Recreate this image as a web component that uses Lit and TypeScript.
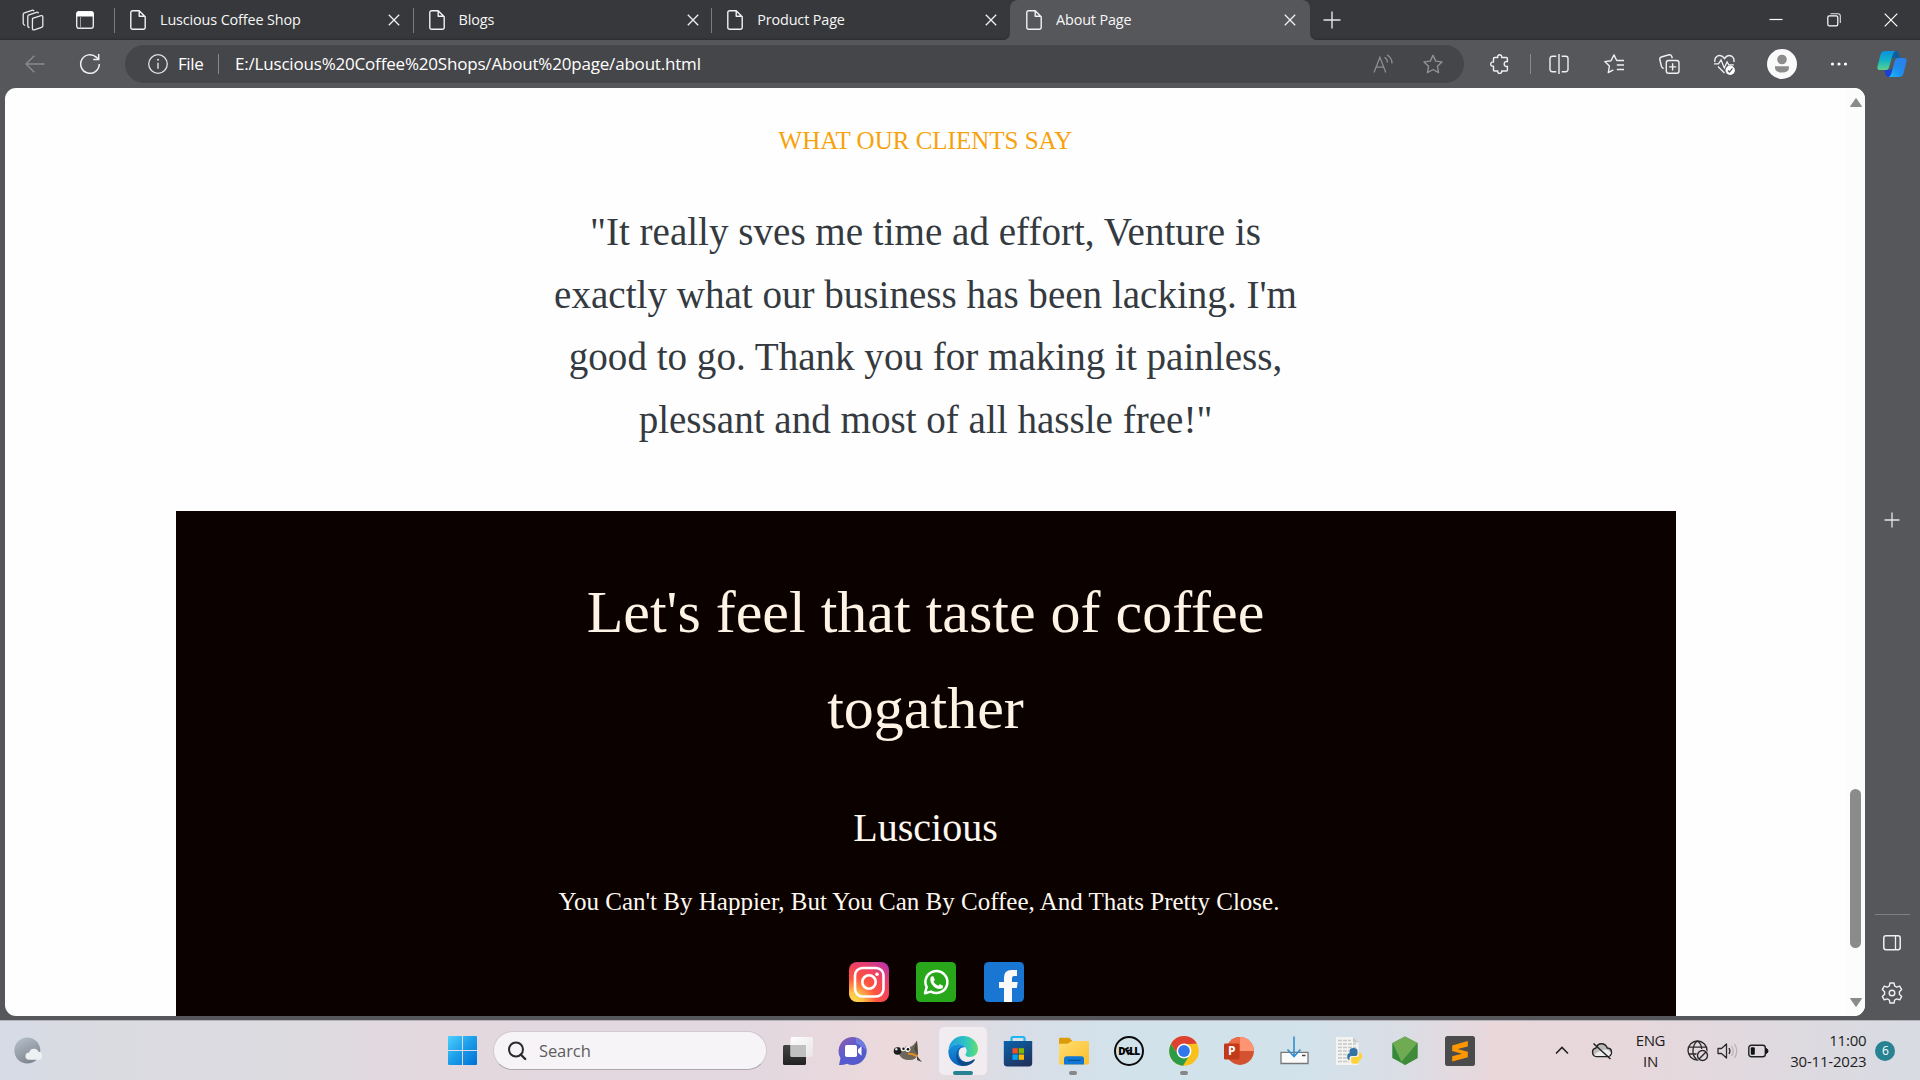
import { LitElement, html, css, svg, nothing } from "lit";
import { customElement, property } from "lit/decorators.js";

const icon = (w: number, h: number, body: unknown, cls = "") =>
  html`<svg class="ico ${cls}" width=${w} height=${h} viewBox="0 0 ${w} ${h}" fill="none">${body}</svg>`;

const docIcon = icon(16, 20, svg`<path d="M3 .8h6.2l6 6v10.6a1.8 1.8 0 0 1-1.8 1.8H2.6A1.8 1.8 0 0 1 .8 17.400V2.600A1.8 1.8 0 0 1 2.600 .8ZM9.200 1v5.300h5.600" stroke="#f2f2f2" stroke-width="1.4" stroke-linejoin="round"/>`);
const closeIcon = icon(12, 12, svg`<path d="M.8.8l10.400 10.400M11.200.8L.8 11.200" stroke="#f0f0f0" stroke-width="1.3"/>`);

const chrome = {
  spaces: icon(22, 22, svg`<g stroke="#e8e8e8" stroke-width="1.3" stroke-linejoin="round"><path d="M10.500 9.300l8.500-2.600q1.800-.4 1.800 1.300v8.800q0 1.200-1.200 1.600l-7.400 2.400q-1.800.4-1.800-1.300Z"/><path d="M7.500 18.500q-1.700 0-1.700-1.700V7.400q0-1.200 1.200-1.600l7.500-2.500q1.600-.4 1.900 1.100"/><path d="M3.200 16.300q-2-.2-2-2V5.500q0-1.200 1.200-1.600L10 1.300q1.500-.4 1.900.9"/></g>`),
  tabs: icon(18, 18, svg`<rect x=".7" y=".7" width="16.600" height="16.600" rx="2.200" stroke="#e8e8e8" stroke-width="1.4"/><path d="M.5 2.500a2 2 0 0 1 2-2h13a2 2 0 0 1 2 2V5.500H.5Z" fill="#fff"/><path d="M4.500 5v12" stroke="#999a9c" stroke-width="1"/>`),
  plus: icon(18, 18, svg`<path d="M9 .5v17M.5 9h17" stroke="#e6e6e6" stroke-width="1.400"/>`),
  min: icon(14, 14, svg`<path d="M.5 6.500h13" stroke="#fff" stroke-width="1.200"/>`),
  max: icon(14, 14, svg`<rect x=".8" y="2.800" width="10" height="10" rx="1.600" stroke="#fff" stroke-width="1.200"/><path d="M3.500.7h7.500a2.300 2.300 0 0 1 2.300 2.300v7" stroke="#e2e2e2" stroke-width="1.100"/>`),
  close: icon(14, 14, svg`<path d="M.7.7l12.600 12.600M13.300.7L.7 13.300" stroke="#fff" stroke-width="1.200"/>`),
  back: icon(20, 18, svg`<path d="M19.500 9H1M9.300.8L1 9l8.300 8.200" stroke="#898a8d" stroke-width="1.400"/>`),
  reload: icon(22, 22, svg`<path d="M20.300 11a9.300 9.300 0 1 1-3.100-6.900L19.600 6.300" stroke="#f0f0f0" stroke-width="1.500"/><path d="M19.700 1v5.500h-5.500" stroke="#f0f0f0" stroke-width="1.500"/>`),
  info: icon(20, 20, svg`<circle cx="10" cy="10" r="9.300" stroke="#e0e0e0" stroke-width="1.300"/><path d="M10 8.800v6" stroke="#e0e0e0" stroke-width="1.400"/><circle cx="10" cy="5.800" r="1" fill="#e0e0e0"/>`),
  read: icon(20, 20, svg`<g stroke="#8d8e90" stroke-width="1.300"><path d="M1 18.500L6.900 3.200l5.900 15.300M3.200 13.200h7.600"/><path d="M11.500 3.300q3 1.800 3 5.300M14 .8q5 3.200 5 8.600"/></g>`),
  star: icon(20, 20, svg`<path d="M10 1.300l2.700 5.800 6.300.8-4.600 4.400 1.200 6.300L10 15.500l-5.600 3.100 1.200-6.300L1 7.900l6.300-.8Z" stroke="#909193" stroke-width="1.400" stroke-linejoin="round"/>`),
  puzzle: icon(20, 20, svg`<path d="M4.500 3.500h3.300C6.700-.1 12.600-.1 11.600 3.500h4.800q1 0 1 1v3.200c-4.300-1.200-4.300 5.800 0 4.600v3.700q0 1-1 1h-4.800c1 3.200-4.900 3.200-3.800 0H4.500q-1 0-1-1v-3.800c-3.700.9-3.700-5 0-4.200V4.500q0-1 1-1Z" stroke="#f0f0f0" stroke-width="1.400" stroke-linejoin="round"/>`),
  split: icon(20, 20, svg`<path d="M7.300 2.300H3.200a2.200 2.200 0 0 0-2.200 2.200v11a2.200 2.200 0 0 0 2.200 2.200h4.100M12.700 2.300h4.100A2.200 2.200 0 0 1 19 4.500v11a2.200 2.200 0 0 1-2.200 2.200h-4.100M10 0v20" stroke="#f0f0f0" stroke-width="1.400"/>`),
  favs: icon(21, 20, svg`<path d="M12.800 6.800L10 .9 7 6.800l-6.200.8 4.600 4.500-1.100 6.500 5-2.700M12.800 6.500H20M12.800 11H20M12.800 15.500H20" stroke="#f0f0f0" stroke-width="1.400" stroke-linejoin="round"/>`),
  collections: icon(21, 20, svg`<rect x="7.300" y="6.500" width="12.700" height="12.700" rx="2.200" stroke="#f0f0f0" stroke-width="1.400"/><path d="M13.600 9.300v7.200M10 12.900h7.200M4.700 14.500Q3 14 2.400 12.200L.8 5.500Q.5 3.700 2.300 3L10 .8q2-.3 2.700 1.500l.6 1.900" stroke="#f0f0f0" stroke-width="1.400"/>`),
  heart: icon(21, 21, svg`<path d="M1 8C0 4 3 1.300 6 1.500q2.700.2 4.500 3Q12.500 1.500 15 1.500c3.400 0 5.700 3 4.800 6.500M4 12.500l6.500 6.500" stroke="#f0f0f0" stroke-width="1.400"/><path d="M0 9.800h4.500L7 6l3.300 8 2.800-6 1.700 2.800h5" stroke="#f0f0f0" stroke-width="1.300"/><circle cx="16.200" cy="16.200" r="4.700" fill="#fff"/><path d="M14 16.500l1.500 1.500 3-3.600" stroke="#56575b" stroke-width="1.200"/>`),
  avatar: icon(30, 30, svg`<circle cx="15" cy="15" r="15" fill="#fafafa"/><circle cx="15" cy="10.500" r="4.800" fill="#8c8c8c"/><path d="M8 17.200h14v1.300q0 5-7 5t-7-5Z" fill="#8c8c8c"/>`),
  dots: icon(18, 6, svg`<circle cx="2.500" cy="3" r="1.600" fill="#fff"/><circle cx="9" cy="3" r="1.600" fill="#fff"/><circle cx="15.500" cy="3" r="1.600" fill="#fff"/>`),
  copilot: icon(30, 28, svg`<defs><linearGradient id="cp1" x1="0" y1="0" x2="0" y2="1"><stop stop-color="#0b91de"/><stop offset=".5" stop-color="#12b4c4"/><stop offset="1" stop-color="#5ed18c"/></linearGradient><linearGradient id="cp2" x1="1" y1="0" x2="0" y2="1"><stop stop-color="#2d7be8"/><stop offset=".55" stop-color="#1f8df0"/><stop offset="1" stop-color="#15bdf6"/></linearGradient></defs><path d="M16 1h3q2.200 0 3 2.500L23 8h-6q-2.500 0-3.200 3Z" fill="#0e5e9c"/><path d="M14 27h-2.500q-2.200 0-3-2.500L7.500 20H12q2.500 0 3.500-3Z" fill="#1b3fd6"/><path d="M8 1h10.500q-2 .8-3 4L12 17.500Q11.300 20 9 20H3Q-.2 20 .5 16.500L3.500 4.500Q4.500 1 8 1Z" fill="url(#cp1)"/><path d="M22 27H11.500q2-.8 3-4L18 10.500Q18.700 8 21 8h6q3.200 0 2.500 3.500l-3 12Q25.500 27 22 27Z" fill="url(#cp2)"/>`),
  panel: icon(18, 16, svg`<rect x=".8" y=".8" width="16.400" height="14" rx="2.200" stroke="#f0f0f0" stroke-width="1.500"/><path d="M12.500 1v14" stroke="#f0f0f0" stroke-width="1.300"/>`),
  gear: icon(22, 22, svg`<circle cx="11" cy="11" r="2.800" stroke="#f0f0f0" stroke-width="1.400"/><path d="M9 1h4l.7 3 2 1.100 3-1 2 3.500L18.400 9.800v2.400l2.300 2.200-2 3.500-3-1-2 1.100-.7 3H9l-.7-3-2-1.100-3 1-2-3.500 2.300-2.200V9.800L1.300 7.600l2-3.500 3 1 2-1.100Z" stroke="#f0f0f0" stroke-width="1.400" stroke-linejoin="round"/>`),
};

const social = {
  instagram: icon(40, 40, svg`<defs><radialGradient id="ig" cx=".1" cy="1" r="1.300"><stop stop-color="#ffdd55"/><stop offset=".18" stop-color="#ffc247"/><stop offset=".45" stop-color="#ff543e"/><stop offset=".68" stop-color="#f2445c"/><stop offset="1" stop-color="#b733b4"/></radialGradient></defs><rect width="40" height="40" rx="8" fill="url(#ig)"/><rect x="6" y="6" width="28.500" height="28.500" rx="7.500" stroke="#fff" stroke-width="2.600"/><circle cx="20" cy="20" r="6.700" stroke="#fff" stroke-width="2.600"/><circle cx="28" cy="12.300" r="1.800" fill="#fff"/>`),
  whatsapp: icon(40, 40, svg`<rect width="40" height="40" rx="4.500" fill="#29a71a"/><path d="M9 31.200l1.700-6A11 11 0 1 1 15 29.600Z" stroke="#fff" stroke-width="2.500" stroke-linejoin="round"/><path d="M14.700 15.300q1-1.600 2.600-1l1.400 3.300q.2.700-1.200 2.100 1.600 2.900 4.600 4 1.300-1.700 1.900-1.500l3 1.500q.4 3.100-3.400 3.400c-5 0-11-6.800-8.900-11.800Z" fill="#fff"/>`),
  facebook: icon(40, 40, svg`<rect width="40" height="40" rx="4.500" fill="#1976d2"/><path d="M33.700 20l-.9 6H28v14h-8V26h-5v-6h5v-4.500Q20 8 27.500 8H33v6h-3q-2 0-2 2v4Z" fill="#fafafa"/>`),
};

const apps: { art: unknown; state?: "active" | "open" }[] = [
  { art: icon(32, 30, svg`<defs><linearGradient id="tv" x1="0" y1="0" x2="0" y2="1"><stop stop-color="#444"/><stop offset="1" stop-color="#222"/></linearGradient><linearGradient id="tv2" x1="0" y1="0" x2="1" y2="1"><stop stop-color="#fff"/><stop offset="1" stop-color="#e8e5e5"/></linearGradient></defs><rect x="1" y="9" width="23" height="20" rx="1.500" fill="url(#tv)"/><rect x="8.500" y="1" width="22.500" height="20" rx="1.500" fill="url(#tv2)" opacity=".95"/><path d="M8.500 9H24v12H10a1.500 1.500 0 0 1-1.500-1.500Z" fill="#b9b9b9" opacity=".85"/>`) },
  { art: icon(30, 30, svg`<defs><linearGradient id="ch" x1="0" y1="0" x2=".8" y2="1"><stop stop-color="#935ea9"/><stop offset=".5" stop-color="#5b5bd0"/><stop offset="1" stop-color="#5059c9"/></linearGradient></defs><path d="M15 1a14 14 0 1 1-6 26.800Q5 29.400 1 29l1.500-7A14 14 0 0 1 15 1Z" fill="url(#ch)"/><path d="M18 2a14 14 0 0 1 11 13l-4-4-7-4Z" fill="#7b95ea" opacity=".6"/><rect x="7" y="9" width="12" height="12" rx="1.800" fill="#fff"/><path d="M20 13.500l3.500-3.300v9.600L20 16.500Z" fill="#fff"/>`) },
  { art: icon(30, 30, svg`<path d="M5 11q4 2 8-.5 5 3 11-6l1 14q-2.500 6-9 5.500-7 0-10-5.500Z" fill="#6c665b"/><path d="M24 5l-3 8 4 6Z" fill="#4b463e"/><circle cx="4.500" cy="15" r="3.800" fill="#1c1d1e"/><circle cx="3.300" cy="13.300" r="1.200" fill="#dcdcdc"/><circle cx="10" cy="12.800" r="2.500" fill="#e9e9e5"/><circle cx="14.700" cy="13.200" r="2.700" fill="#f1f1ee"/><circle cx="10.500" cy="12.800" r="1.200" fill="#111"/><circle cx="15" cy="13.200" r="1.300" fill="#111"/><path d="M15 17.500q5 0 9.500 3" stroke="#e28c20" stroke-width="2.200"/><path d="M24 20l5 6-5-2Z" fill="#444"/>`, "gimp") },
  { state: "active", art: icon(30, 30, svg`<defs><linearGradient id="e1" x1="0" y1=".5" x2="1" y2=".5"><stop stop-color="#1b9de2"/><stop offset=".6" stop-color="#2fc6c0"/><stop offset="1" stop-color="#63e06f"/></linearGradient><linearGradient id="e2" x1="0" y1="0" x2="0" y2="1"><stop stop-color="#1795df"/><stop offset="1" stop-color="#0c5fb8"/></linearGradient></defs><path d="M.5 14C1 6 7.500 0 15 0c9 0 15 6.500 15 13 0 5-3.800 8-8.200 8-3 0-4.600-1.200-4.600-2.300 0-.9 1.300-1.400 1.300-3.900C18.500 10.800 14.500 8 10.300 8 5.500 8 1.500 10.800.5 14Z" fill="url(#e1)"/><path d="M.4 14.500C1.600 10.800 5.500 8 10.300 8c3.300 0 6 1.500 7.400 3.700-5.500-2-8.300 3.800-6.200 9 1.500 3.500 5.500 6.300 10.500 5.500Q18.500 30 13.500 30C6 29.300-.3 23 .4 14.500Z" fill="url(#e2)"/><path d="M17 11.300c-6.500-1.300-9 5.700-6.500 10.500 2.300 4.300 8.500 5.800 14.500 1.900q1.600-1 2 .2Q23 30 15 30 9 28 8.300 20.500 8 13.500 12.500 11.500Q15 10.800 17 11.300Z" fill="#114a8b"/><path d="M17 11.300q-4.500 1.500-3 6 1.600 5 9.500 3.500-6 1-6.300-2.100 0-.9 1.100-2.300.6-3-1.300-5.100Z" fill="#f0ecf0"/>`) },
  { art: icon(30, 32, svg`<defs><linearGradient id="st" x1="0" y1="0" x2=".6" y2="1"><stop stop-color="#0a64ad"/><stop offset="1" stop-color="#1f3360"/></linearGradient></defs><path d="M8.500 7V3.500a1.500 1.500 0 0 1 1.500-1.500h10a1.500 1.500 0 0 1 1.500 1.500V7" stroke="#20b5f0" stroke-width="2.200"/><path d="M.8 6h28.400v22a3.500 3.500 0 0 1-3.500 3.500H4.300A3.500 3.500 0 0 1 .8 28Z" fill="url(#st)"/><path d="M9.500 13.200h5.300v5.300H9.500Z" fill="#f25022"/><path d="M15.700 13.200H21v5.300h-5.300Z" fill="#7fba00"/><path d="M9.500 19.500h5.300v5.300H9.500Z" fill="#00a4ef"/><path d="M15.700 19.500H21v5.300h-5.300Z" fill="#ffb900"/>`) },
  { state: "open", art: icon(30, 28, svg`<defs><linearGradient id="fx" x1="0" y1="0" x2="1" y2="1"><stop stop-color="#ffdd70"/><stop offset="1" stop-color="#fdbf2d"/></linearGradient></defs><path d="M0 2Q0 .7 1.300.7h9l3.200 3.300-3 5H0Z" fill="#dc9c0a"/><path d="M0 6.800h8.500L13 4h15.700Q30 4 30 5.300v20.900q0 1.300-1.300 1.300H1.300Q0 27.500 0 26.200Z" fill="url(#fx)"/><path d="M5 27.500V22q0-2.700 2.700-2.700h14.600Q25 19.300 25 22v5.500Z" fill="#0f78d4"/><path d="M9 23.300h12.500" stroke="#0a4f96" stroke-width="1.200"/>`) },
  { art: html`<span class="dell"><b>D<i>E</i>LL</b></span>` },
  { state: "open", art: icon(30, 30, svg`<circle cx="15" cy="15" r="14.800" fill="#f9c21b"/><path d="M2 8A14.800 14.800 0 0 1 28 7.600L15 8.500 9 18.500Z" fill="#de4031"/><path d="M1.900 8A14.800 14.800 0 0 0 14 29.800L21 18.500 9.200 18.800Z" fill="#2c9b48"/><circle cx="15" cy="15" r="7.400" fill="#fff"/><circle cx="15" cy="15" r="5.900" fill="#2f77ea"/>`) },
  { art: html`<span class="ppt">${icon(30, 30, svg`<circle cx="16" cy="15" r="13.900" fill="#d35230"/><path d="M16 1.100a13.900 13.900 0 0 1 13.900 13.900H16Z" fill="#ff9473"/><path d="M16 1.100V15H2.100A13.900 13.900 0 0 1 16 1.100Z" fill="#ed6c47"/><rect x="0" y="7.500" width="15.500" height="16" rx="1.300" fill="#c13b1b"/>`)}<b>P</b></span>` },
  { art: icon(30, 30, svg`<path d="M2 16.300h27v11.200H2Z" fill="#fafafa" stroke="#777" stroke-width="1.300"/><path d="M15 .5v19M8.500 13.500l6.500 7 6.500-7" stroke="#3190d0" stroke-width="1.600"/><path d="M23 19.500h3.500" stroke="#444" stroke-width="1.500"/>`) },
  { art: icon(30, 30, svg`<path d="M2 1h17l5.500 5.500V29H2Z" fill="#f3f3f1"/><path d="M19 1v5.500h5.500Z" fill="#c9c9c9"/><path d="M4 4.500h13M4 8h18M4 11.500h18M4 15h11M4 18.500h10M4 22h10M4 25.500h11" stroke="#c7c8c9" stroke-width="1.300" stroke-dasharray="4 1"/><path d="M15.500 17v-2q0-3 4-3t4 3v3q0 2-2 2h-4q-2 0-2 2v2q-2.300 0-2.300-3.500T16 17Z" fill="#3772a4"/><path d="M25 16.500q3.200 0 3.200 3.700T25 24v1.500q0 2.300-4 2.300t-4-2.300V23q0-2 2-2h4q2 0 2-2Z" fill="#ffd43b"/>`) },
  { art: icon(28, 30, svg`<path d="M14 .5l12.500 6.500v15L14 29 1.500 22V7Z" fill="#4a9844"/><path d="M14 .5l12.500 6.500L10.500 26 1.500 7Z" fill="#6eab53"/><path d="M1.500 7l9 19L1.500 22Z" fill="#35893b"/><path d="M26.500 7L10.500 26l3.500 3 12.500-7Z" fill="#3f8a3b"/>`) },
  { art: icon(30, 30, svg`<rect width="30" height="30" rx="2.500" fill="#4b4b4b"/><path d="M22.800 5v5.400L12.500 13l10.300 2.800v5.500L7.200 25.500v-5.300l9.800-2.500-9.800-2.600V9.500Z" fill="#ff9800"/>`) },
];

const tray = {
  chevron: icon(14, 9, svg`<path d="M1 7.500l6-6 6 6" stroke="#222" stroke-width="1.600"/>`),
  cloud: icon(22, 18, svg`<path d="M5.500 14.500a4.300 4.300 0 0 1-.5-8.500Q6.300 1.700 10.500 1.700T16.300 6q4.200.2 4.200 4.200t-4 4.300Z" fill="#bbb" stroke="#222" stroke-width="1.400"/><path d="M3 13q6-6 14-5l3 3-2 3H5Z" fill="#ececec"/><path d="M2.500 1.500l17 15.500" stroke="#222" stroke-width="1.500"/>`),
  globe: icon(22, 22, svg`<g stroke="#2a2a2a" stroke-width="1.300"><circle cx="10.500" cy="10.500" r="9.500"/><path d="M2 7.200h17M2 14h8M10 20q-4.500-4-4-10Q6.500 3.500 10.500 1q4 3 4.200 8"/></g><circle cx="15.500" cy="15.500" r="6.300" fill="#e4d9de"/><circle cx="15.500" cy="15.500" r="5" stroke="#2a2a2a" stroke-width="1.400"/><path d="M12 19l7-7" stroke="#2a2a2a" stroke-width="1.400"/>`),
  speaker: icon(22, 18, svg`<path d="M1 6.500h3.500L9.500 2v14l-5-4.500H1Z" stroke="#2a2a2a" stroke-width="1.300" stroke-linejoin="round"/><path d="M12 6q1.800 3 0 6" stroke="#2a2a2a" stroke-width="1.300"/><path d="M14.500 4q3.300 5 0 10M17.500 2q4.500 7 0 14" stroke="#bcb2b6" stroke-width="1.300"/>`),
  battery: icon(21, 14, svg`<rect x=".8" y="1.300" width="16.500" height="11.400" rx="2.500" stroke="#222" stroke-width="1.400"/><rect x="2.800" y="3.300" width="4" height="7.400" rx="1" fill="#111"/><path d="M18 4.500q2 .5 2 2.500t-2 2.500Z" fill="#111" stroke="#111"/>`),
  moon: icon(28, 28, svg`<defs><linearGradient id="mo" x1=".2" y1="0" x2=".7" y2="1"><stop stop-color="#b2bec8"/><stop offset="1" stop-color="#7e838d"/></linearGradient></defs><circle cx="13.300" cy="13.500" r="13" fill="url(#mo)"/><path d="M15 22.800a3.600 3.600 0 0 1 .2-7.200 5 5 0 0 1 9.400-.8 4 4 0 0 1-.6 8Z" fill="#eef1f3"/>`),
  win: icon(29, 29, svg`<defs><linearGradient id="wn" x1="0" y1="0" x2="1" y2="1"><stop stop-color="#4cd0fd"/><stop offset=".5" stop-color="#1b9ce8"/><stop offset="1" stop-color="#0070d6"/></linearGradient></defs><path d="M0 1q0-1 1-1h13v14H0ZM15 0h13q1 0 1 1v13H15ZM0 15h14v14H1q-1 0-1-1ZM15 15h14v13q0 1-1 1H15Z" fill="url(#wn)"/>`),
  search: icon(20, 20, svg`<circle cx="9" cy="8.500" r="7" stroke="#2b2b2b" stroke-width="2"/><path d="M13.700 13.500l4.500 4.500" stroke="#2b2b2b" stroke-width="2.400" stroke-linecap="round"/>`),
};

const shared = css`
  * { box-sizing: border-box; }
  .ico { display: block; flex: none; }
`;

@customElement("browser-tab")
class BrowserTab extends LitElement {
  @property() label = "";
  @property({ type: Boolean }) divider = false;
  static styles = [shared, css`
    :host { display: block; flex: none; width: 298.600px; height: 40px; }
    .tab { display: flex; align-items: center; height: 40px; padding: 0 12.500px 0 16px; position: relative; }
    .label { flex: 1; margin-left: 14px; font: 14.400px/20px "Open Sans", sans-serif; letter-spacing: -.13px; color: #f6f6f6; white-space: nowrap; padding-bottom: 1px; }
    .tab.line::before { content: ""; position: absolute; left: 0; top: 8px; width: 1px; height: 25px; background: #7b7c7e; }
  `];
  render() {
    return html`<div class="tab ${this.divider ? "line" : ""}">${docIcon}<span class="label">${this.label}</span>${closeIcon}</div>`;
  }
}

@customElement("client-page")
class ClientPage extends LitElement {
  static styles = [shared, css`
    :host { display: flex; flex: none; width: 1860px; height: 928px; background: #fefefe; border-radius: 11px; overflow: hidden; font-family: "Liberation Serif", "Times New Roman", serif; }
    .content { width: 1841px; display: flex; flex-direction: column; align-items: center; text-align: center; padding-top: 33px; }
    .eyebrow { margin: 0; font-size: 25px; line-height: 40px; font-weight: 400; color: #f7a20d; }
    .quote { margin: 40px 0 0; width: 780px; font-size: 39.100px; line-height: 62.600px; color: #343a40; }
    .line { display: block; white-space: nowrap; }
    .hero { flex: 1; width: 1500px; margin-top: 59.600px; padding-top: 53px; background: #0b0200; color: #fff3e6; display: flex; flex-direction: column; align-items: center; }
    .title { margin: 0; font-size: 60px; line-height: 96px; font-weight: 400; }
    .brand { margin: 40px 0 0; font-size: 40px; line-height: 64px; font-weight: 400; color: #fff8f0; }
    .tag { margin: 22px 13px 0 0; font-size: 25px; line-height: 40px; color: #fff8f0; white-space: nowrap; }
    .social { display: flex; gap: 27.500px; margin: 40px 0 0 21px; }
    .scroll { width: 19px; background: #fcfcfc; display: flex; flex-direction: column; align-items: center; padding: 10px 0 9px; }
    .thumb { width: 11px; height: 159px; border-radius: 5.500px; background: #8b8b8b; margin-top: 682px; }
    .down { margin-top: auto; }
  `];
  render() {
    return html`
      <div class="content">
        <h2 class="eyebrow">WHAT OUR CLIENTS SAY</h2>
        <p class="quote">
          <span class="line">"It really sves me time ad effort, Venture is</span>
          <span class="line">exactly what our business has been lacking. I'm</span>
          <span class="line">good to go. Thank you for making it painless,</span>
          <span class="line">plessant and most of all hassle free!"</span>
        </p>
        <section class="hero">
          <h1 class="title"><span class="line">Let's feel that taste of coffee</span><span class="line">togather</span></h1>
          <h3 class="brand">Luscious</h3>
          <p class="tag">You Can't By Happier, But You Can By Coffee, And Thats Pretty Close.</p>
          <div class="social">${social.instagram}${social.whatsapp}${social.facebook}</div>
        </section>
      </div>
      <div class="scroll">
        ${icon(12, 9, svg`<path d="M6 .5l5.500 8H.5Z" fill="#8b8b8b" stroke="#8b8b8b" stroke-linejoin="round"/>`)}
        <div class="thumb"></div>
        ${icon(12, 9, svg`<path d="M6 8.500L.5.5h11Z" fill="#8b8b8b" stroke="#8b8b8b" stroke-linejoin="round"/>`, "down")}
      </div>`;
  }
}

@customElement("task-bar")
class TaskBar extends LitElement {
  static styles = [shared, css`
    :host { display: flex; align-items: center; height: 60px; border-top: 1px solid #b4b1b8; font-family: "Open Sans", "Noto Sans", sans-serif; color: #1d1d1d;
      background: linear-gradient(90deg, #d6dbe6 0, #dadbe1 90px, #dcdbe0 280px, #e3d8de 440px, #e3d8df 760px, #ecd9dc 900px, #d9dde6 1010px, #d2e2eb 1120px, #d2e2eb 1300px, #d9dee6 1390px, #e9d7da 1500px, #e6d8dc 1650px, #dddae0 1800px, #d8dbe3 1920px); }
    :host > *, .ico { flex: none; }
    .moon { margin-left: 14px; }
    .win { margin-left: 406px; }
    .search { margin-left: 16px; width: 274px; height: 39px; border-radius: 20px; background: #f6f4f6; border: 1px solid #d0c9cf; border-bottom-color: #aea8ae; display: flex; align-items: center; padding-left: 13px; font-size: 16.500px; letter-spacing: -.1px; color: #5f5c5e; }
    .search span { margin-left: 12px; padding-bottom: 1px; }
    .apps { display: flex; margin-left: 3px; }
    .cell { flex: none; width: 55.200px; height: 48px; display: flex; align-items: center; justify-content: center; position: relative; }
    .tile { width: 48px; height: 48px; display: flex; align-items: center; justify-content: center; border-radius: 5px; }
    .active .tile { background: #f0ecf0; box-shadow: 0 0 0 1px #e2dbe1; }
    .active::after, .open::after { content: ""; position: absolute; bottom: 0; left: 17.500px; width: 20px; height: 4px; border-radius: 2px; background: #278391; }
    .open::after { left: 23.500px; width: 8px; background: #85878b; }
    .dell { width: 30px; height: 30px; border: 2px solid #0b0b0b; border-radius: 50%; display: flex; align-items: center; justify-content: center; }
    .dell b { font: 800 10px/12px "Open Sans", sans-serif; letter-spacing: -.9px; color: #000; }
    .dell i { display: inline-block; font-style: normal; transform: rotate(-28deg); }
    .ppt { display: grid; }
    .ppt > * { grid-area: 1 / 1; }
    .ppt b { color: #fff; font-size: 12px; line-height: 16px; padding: 7px 0 0 4px; z-index: 1; }
    .tray { display: flex; align-items: center; margin-left: 68px; }
    .lang { width: 40px; margin-left: 17px; text-align: center; font-size: 15px; line-height: 20.500px; letter-spacing: -.4px; }
    .clock { width: 90px; margin-left: 7px; text-align: right; font-size: 15px; line-height: 20.500px; letter-spacing: -.2px; white-space: nowrap; }
    .badge { width: 20px; height: 20px; margin-left: 9px; border-radius: 50%; background: #278391; color: #fff; font-size: 12px; line-height: 19px; text-align: center; }
    .cloud { margin-left: 22px; } .globe { margin-left: 17px; } .speaker { margin-left: 8px; } .battery { margin-left: 9px; }
  `];
  render() {
    return html`
      <span class="moon">${tray.moon}</span>
      <span class="win">${tray.win}</span>
      <div class="search">${tray.search}<span>Search</span></div>
      <div class="apps">${apps.map(a => html`<div class="cell ${a.state ?? ""}"><div class="tile">${a.art ?? nothing}</div></div>`)}</div>
      <div class="tray">
        ${tray.chevron}<span class="cloud">${tray.cloud}</span>
        <div class="lang">ENG<br>IN</div>
        <span class="globe">${tray.globe}</span><span class="speaker">${tray.speaker}</span><span class="battery">${tray.battery}</span>
        <div class="clock">11:00<br>30-11-2023</div>
        <div class="badge">6</div>
      </div>`;
  }
}

@customElement("app-root")
class AppRoot extends LitElement {
  static styles = [shared, css`
    :host { display: flex; flex-direction: column; width: 1920px; height: 1080px; overflow: hidden; background: #56575b; font-family: "Open Sans", "Noto Sans", sans-serif; }
    .strip { display: flex; height: 40px; flex: none; }
    .left, .right { background: #37383b; display: flex; align-items: center; height: 40px; box-shadow: inset 0 -2px 2px -1px #2c2d2f; }
    .left { width: 1010px; border-bottom-right-radius: 7px; }
    .right { flex: 1; border-bottom-left-radius: 7px; padding-left: 13px; }
    .current { width: 299.500px; height: 40px; background: #56575b; border-radius: 8px 8px 0 0; }
    .corners { background: linear-gradient(#37383b 50%, #56575b 50%); }
    .spaces { margin: 0 32.500px 0 21.500px; }
    .tabsicon { margin-right: 20px; }
    .winctl { display: flex; gap: 43.500px; margin: 0 22px 0 auto; }
    .bar { display: flex; align-items: center; height: 48px; flex: none; color: #fff; }
    .back { margin-left: 25px; } .reload { margin: 0 24px 0 34px; }
    .pill { width: 1339px; height: 38px; border-radius: 19px; background: #454649; display: flex; align-items: center; padding: 0 21px 0 22.500px; font-size: 17px; letter-spacing: -.19px; }
    .file { margin-left: 10.500px; width: 40px; padding-bottom: 1px; letter-spacing: -.4px; }
    .url { margin-left: 16px; flex: 1; white-space: nowrap; padding-bottom: 1px; }
    .vr { width: 1px; height: 20px; background: #898a8c; }
    .star { margin-left: 30px; }
    .puzzle { margin: 0 20px 0 25.500px; }
    .split { margin-left: 18px; } .favs { margin-left: 35.500px; } .coll { margin-left: 34px; } .heart { margin-left: 34px; } .avatar { margin-left: 32px; } .dots { margin-left: 33px; } .copilot { margin-left: 29px; }
    .body { display: flex; height: 932px; padding-left: 5px; }
    .side { flex: 1; display: flex; flex-direction: column; align-items: center; padding-right: 1px; }
    .add { margin-top: 423.500px; }
    .hr { width: 35px; height: 1px; background: #7f8083; margin-top: 386.500px; }
    .panel { margin-top: 20px; } .gear { margin-top: 30.500px; }
  `];
  render() {
    return html`
      <div class="strip">
        <div class="left">
          <span class="spaces">${chrome.spaces}</span><span class="tabsicon">${chrome.tabs}</span>
          <browser-tab label="Luscious Coffee Shop" divider></browser-tab>
          <browser-tab label="Blogs" divider></browser-tab>
          <browser-tab label="Product Page" divider></browser-tab>
        </div>
        <div class="corners"><div class="current"><browser-tab label="About Page"></browser-tab></div></div>
        <div class="right">${chrome.plus}<div class="winctl">${chrome.min}${chrome.max}${chrome.close}</div></div>
      </div>
      <div class="bar">
        <span class="back">${chrome.back}</span><span class="reload">${chrome.reload}</span>
        <div class="pill">${chrome.info}<span class="file">File</span><span class="vr"></span><span class="url">E:/Luscious%20Coffee%20Shops/About%20page/about.html</span>${chrome.read}<span class="star">${chrome.star}</span></div>
        <span class="puzzle">${chrome.puzzle}</span><span class="vr"></span>
        <span class="split">${chrome.split}</span><span class="favs">${chrome.favs}</span><span class="coll">${chrome.collections}</span>
        <span class="heart">${chrome.heart}</span><span class="avatar">${chrome.avatar}</span><span class="dots">${chrome.dots}</span><span class="copilot">${chrome.copilot}</span>
      </div>
      <div class="body">
        <client-page></client-page>
        <div class="side">
          <span class="add">${icon(16, 16, svg`<path d="M8 .5v15M.5 8h15" stroke="#e6e6e6" stroke-width="1.300"/>`)}</span>
          <span class="hr"></span><span class="panel">${chrome.panel}</span><span class="gear">${chrome.gear}</span>
        </div>
      </div>
      <task-bar></task-bar>`;
  }
}
